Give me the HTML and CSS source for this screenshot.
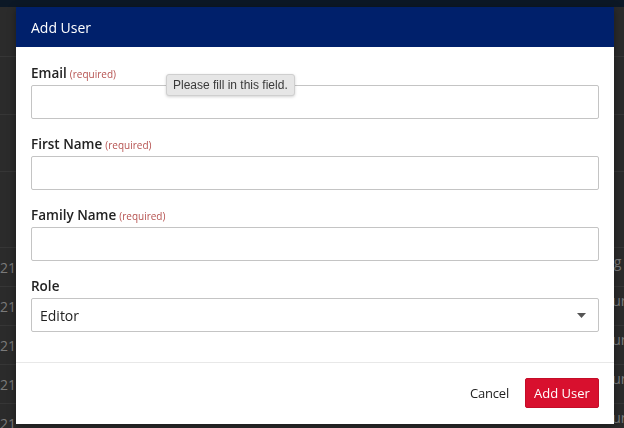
FILE: index.html
```html
<!DOCTYPE html>
<html>
<head>
<meta charset="utf-8">
<link rel="stylesheet" href="styles.css">
</head>
<body>
<div class="page">
  <div class="topbar"></div>
  <div class="table">
    <div class="row r1"><span class="c-left"></span><span class="c-right"></span></div>
    <div class="row r2"><span class="c-left"></span><span class="c-right"></span></div>
    <div class="row r3"><span class="c-left"></span><span class="c-right"></span></div>
    <div class="row r4"><span class="c-left"></span><span class="c-right"></span></div>
    <div class="row"><span class="c-left">2021</span><span class="c-right"><span class="shift-log">Log</span></span></div>
    <div class="row"><span class="c-left">2021</span><span class="c-right"><span class="shift-tour">Tour</span></span></div>
    <div class="row"><span class="c-left">2021</span><span class="c-right"><span class="shift-tour">Tour</span></span></div>
    <div class="row"><span class="c-left">2021</span><span class="c-right"><span class="shift-tour">Tour</span></span></div>
    <div class="row"><span class="c-left">2021</span><span class="c-right"><span class="shift-tour">Tour</span></span></div>
  </div>
</div>

<div class="modal">
  <div class="modal-header">Add User</div>
  <div class="modal-body">
    <div class="field">
      <label class="label">Email<span class="req">(required)</span></label>
      <input class="input" type="email">
    </div>
    <div class="field">
      <label class="label">First Name<span class="req">(required)</span></label>
      <input class="input" type="text">
    </div>
    <div class="field">
      <label class="label">Family Name<span class="req">(required)</span></label>
      <input class="input" type="text">
    </div>
    <div class="field">
      <label class="label">Role</label>
      <div class="select">
        <span>Editor</span>
        <svg class="caret" width="9" height="5" viewBox="0 0 9 5"><path d="M0 0 L9 0 L4.5 5 Z" fill="#555"/></svg>
      </div>
    </div>
  </div>
  <div class="modal-footer">
    <button class="btn btn-link">Cancel</button>
    <button class="btn btn-primary">Add User</button>
  </div>
  <div class="tooltip">Please fill in this field.</div>
</div>
</body>
</html>
```

FILE: styles.css
```css
* { box-sizing: border-box; }
html, body {
  margin: 0;
  padding: 0;
  width: 624px;
  height: 428px;
  overflow: hidden;
  background: #2b2b2b;
  font-family: "Open Sans", "Liberation Sans", sans-serif;
}
.page {
  display: flex;
  flex-direction: column;
}
.topbar {
  height: 7px;
  background: #0c1826;
}
.table {
  display: flex;
  flex-direction: column;
}
.row {
  height: 39px;
  border-bottom: 1px solid #363636;
  display: flex;
  justify-content: space-between;
  align-items: center;
  color: #7a7a7a;
  font-size: 14px;
}
.row.r1 { height: 50px; }
.row.r2 { height: 58px; }
.row.r3 { height: 57px; }
.row.r4 { height: 76px; }
.c-left {
  width: 16px;
  overflow: hidden;
  display: flex;
  justify-content: flex-end;
  white-space: nowrap;
}
.c-right {
  width: 18px;
  overflow: hidden;
  white-space: nowrap;
  display: flex;
  justify-content: flex-start;
  align-self: flex-start;
  padding-top: 4px;
}
.shift-log { margin-left: -8px; }
.shift-tour { margin-left: -10px; }

.modal {
  position: fixed;
  left: 16px;
  top: 7px;
  width: 598px;
  height: 417px;
  background: #fff;
  display: flex;
  flex-direction: column;
  box-shadow: 0 2px 8px rgba(0,0,0,0.4);
}
.modal-header {
  height: 40px;
  background: #00206b;
  color: #fff;
  font-size: 14px;
  padding: 0 15px;
  display: flex;
  align-items: center;
}
.modal-body {
  padding: 16px 15px 0 15px;
  display: flex;
  flex-direction: column;
  border-bottom: 1px solid #e8e8e8;
}
.field {
  display: flex;
  flex-direction: column;
  margin-bottom: 15px;
}
.field:last-child { margin-bottom: 30px; }
.label {
  font-size: 13.5px;
  font-weight: 600;
  color: #222;
  line-height: 20px;
  height: 20px;
  margin-bottom: 2px;
  display: flex;
  align-items: baseline;
}
.req {
  font-size: 10px;
  font-weight: 400;
  color: #b5514f;
  margin-left: 3px;
}
.input {
  height: 34px;
  width: 100%;
  border: 1px solid #c4c4c4;
  border-radius: 2px;
  background: #fff;
  outline: none;
  font-family: inherit;
  font-size: 14px;
  padding: 0 8px;
}
.select {
  height: 34px;
  border: 1px solid #c4c4c4;
  border-radius: 2px;
  display: flex;
  align-items: center;
  justify-content: space-between;
  padding: 0 12px 0 8px;
  font-size: 14px;
  color: #222;
}
.caret { display: block; }
.modal-footer {
  display: flex;
  justify-content: flex-end;
  align-items: center;
  gap: 8px;
  padding: 15px 15px;
}
.btn {
  font-family: inherit;
  font-size: 13px;
  height: 30px;
  border: none;
  border-radius: 2px;
  padding: 0 8px;
  cursor: pointer;
}
.btn-link {
  background: transparent;
  color: #222;
  letter-spacing: -0.2px;
}
.btn-primary {
  background: #d8102e;
  color: #fff;
  width: 74px;
  padding: 0;
  border: 1px solid #c40d28;
}
.tooltip {
  position: absolute;
  left: 150px;
  top: 67px;
  height: 22px;
  padding: 0 6px;
  background: #e6e6e6;
  border: 1px solid #cfcfcf;
  border-radius: 3px;
  box-shadow: 0 1px 3px rgba(0,0,0,0.18);
  font-family: "Liberation Sans", Arial, sans-serif;
  font-size: 12px;
  color: #3a3a3a;
  display: flex;
  align-items: center;
  white-space: nowrap;
}
```
